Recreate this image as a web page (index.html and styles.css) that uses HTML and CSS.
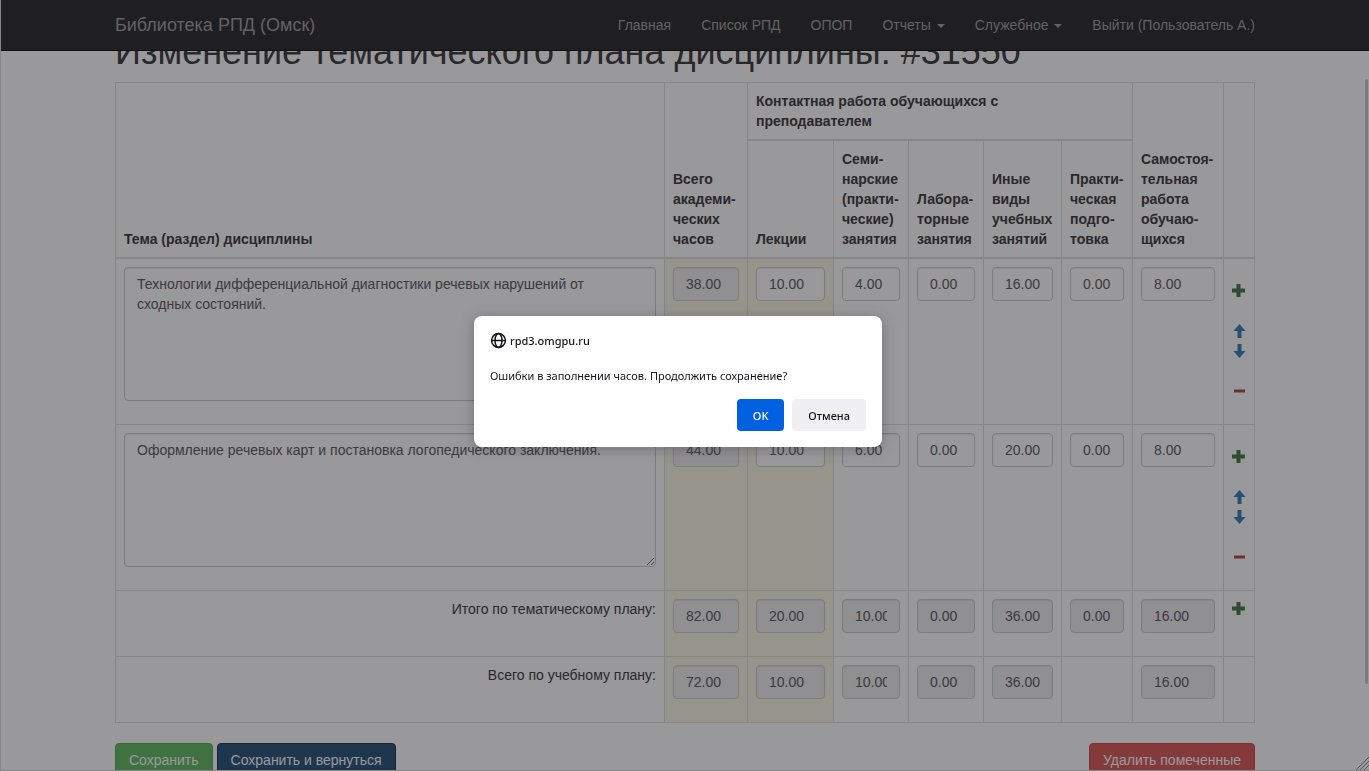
FILE: index.html
```html
<!DOCTYPE html>
<html lang="ru">
<head>
<meta charset="utf-8">
<title>Библиотека РПД (Омск)</title>
<link rel="stylesheet" href="styles.css">
</head>
<body>
<svg class="sprite" aria-hidden="true">
  <symbol id="plus" viewBox="0 0 14 14"><path d="M4.500 0h4v4.500H13v4H8.500V13h-4V8.500H0v-4h4.500z"/></symbol>
  <symbol id="minus" viewBox="0 0 14 14"><path d="M2 5.500h11v3H2z"/></symbol>
  <symbol id="up" viewBox="0 0 14 14"><path d="M7.500 0L13.500 7H9.500v7H5.500V7H1.500z"/></symbol>
  <symbol id="down" viewBox="0 0 14 14"><path d="M5.500 0h4v7h4L7.500 14 1.500 7h4z"/></symbol>
</svg>
<div class="window">
  <nav class="navbar">
    <div class="container navbar-inner">
      <a class="brand" href="#">Библиотека РПД (Омск)</a>
      <div class="nav-links">
        <a href="#">Главная</a>
        <a href="#">Список РПД</a>
        <a href="#">ОПОП</a>
        <a href="#">Отчеты <span class="caret"></span></a>
        <a href="#">Служебное <span class="caret"></span></a>
        <a href="#">Выйти (Пользователь А.)</a>
      </div>
    </div>
  </nav>
  <main class="container content">
    <h1>Изменение тематического плана дисциплины: #31550</h1>
    <table class="plan">
      <colgroup>
        <col><col class="c-total"><col class="c-lect"><col class="c-sem"><col class="c-lab"><col class="c-other"><col class="c-pract"><col class="c-self"><col class="c-act">
      </colgroup>
      <thead>
        <tr>
          <th rowspan="2">Тема (раздел) дисциплины</th>
          <th rowspan="2">Всего академи-<br>ческих часов</th>
          <th colspan="5">Контактная работа обучающихся с<br>преподавателем</th>
          <th rowspan="2">Самостоя-<br>тельная работа обучаю-<br>щихся</th>
          <th rowspan="2"></th>
        </tr>
        <tr>
          <th>Лекции</th>
          <th>Семи-<br>нарские (практи-<br>ческие) занятия</th>
          <th>Лабора-<br>торные занятия</th>
          <th>Иные виды учебных занятий</th>
          <th>Практи-<br>ческая подго-<br>товка</th>
        </tr>
      </thead>
      <tbody>
        <tr>
          <td><textarea class="field" rows="6" aria-label="Тема 1">Технологии дифференциальной диагностики речевых нарушений от
сходных состояний.</textarea></td>
          <td class="warn"><input class="field" aria-label="Всего" value="38.00" readonly></td>
          <td class="warn"><input class="field" aria-label="Лекции" value="10.00"></td>
          <td><input class="field" aria-label="Семинарские" value="4.00"></td>
          <td><input class="field" aria-label="Лабораторные" value="0.00"></td>
          <td><input class="field" aria-label="Иные виды" value="16.00"></td>
          <td><input class="field" aria-label="Практическая подготовка" value="0.00"></td>
          <td><input class="field" aria-label="Самостоятельная работа" value="8.00"></td>
          <td>
            <div class="actions">
              <a class="add" href="#" aria-label="Добавить"><svg><use href="#plus"/></svg></a>
              <div class="move">
                <a href="#" aria-label="Вверх"><svg><use href="#up"/></svg></a>
                <a href="#" aria-label="Вниз"><svg><use href="#down"/></svg></a>
              </div>
              <a class="remove" href="#" aria-label="Удалить"><svg><use href="#minus"/></svg></a>
            </div>
          </td>
        </tr>
        <tr>
          <td><textarea class="field" rows="6" aria-label="Тема 2">Оформление речевых карт и постановка логопедического заключения.</textarea></td>
          <td class="warn"><input class="field" aria-label="Всего" value="44.00" readonly></td>
          <td class="warn"><input class="field" aria-label="Лекции" value="10.00"></td>
          <td><input class="field" aria-label="Семинарские" value="6.00"></td>
          <td><input class="field" aria-label="Лабораторные" value="0.00"></td>
          <td><input class="field" aria-label="Иные виды" value="20.00"></td>
          <td><input class="field" aria-label="Практическая подготовка" value="0.00"></td>
          <td><input class="field" aria-label="Самостоятельная работа" value="8.00"></td>
          <td>
            <div class="actions">
              <a class="add" href="#" aria-label="Добавить"><svg><use href="#plus"/></svg></a>
              <div class="move">
                <a href="#" aria-label="Вверх"><svg><use href="#up"/></svg></a>
                <a href="#" aria-label="Вниз"><svg><use href="#down"/></svg></a>
              </div>
              <a class="remove" href="#" aria-label="Удалить"><svg><use href="#minus"/></svg></a>
            </div>
          </td>
        </tr>
        <tr>
          <td class="sum">Итого по тематическому плану:</td>
          <td class="warn"><input class="field" aria-label="Итого всего" value="82.00" readonly></td>
          <td class="warn"><input class="field" aria-label="Итого лекции" value="20.00" readonly></td>
          <td><input class="field" aria-label="Итого семинарские" value="10.00" readonly></td>
          <td><input class="field" aria-label="Итого лабораторные" value="0.00" readonly></td>
          <td><input class="field" aria-label="Итого иные виды" value="36.00" readonly></td>
          <td><input class="field" aria-label="Итого практическая подготовка" value="0.00" readonly></td>
          <td><input class="field" aria-label="Итого самостоятельная работа" value="16.00" readonly></td>
          <td><a class="add" href="#" aria-label="Добавить"><svg><use href="#plus"/></svg></a></td>
        </tr>
        <tr>
          <td class="sum">Всего по учебному плану:</td>
          <td class="warn"><input class="field" aria-label="План всего" value="72.00" readonly></td>
          <td class="warn"><input class="field" aria-label="План лекции" value="10.00" readonly></td>
          <td><input class="field" aria-label="План семинарские" value="10.00" readonly></td>
          <td><input class="field" aria-label="План лабораторные" value="0.00" readonly></td>
          <td><input class="field" aria-label="План иные виды" value="36.00" readonly></td>
          <td></td>
          <td><input class="field" aria-label="План самостоятельная работа" value="16.00" readonly></td>
          <td></td>
        </tr>
      </tbody>
    </table>
    <div class="buttons">
      <button class="btn save" type="button">Сохранить</button>
      <button class="btn save-back" type="button">Сохранить и вернуться</button>
      <button class="btn delete" type="button">Удалить помеченные</button>
    </div>
  </main>
  <div class="scrollbar"></div>
  <svg class="grip" viewBox="0 0 13 13"><path d="M0 13L13 0M4 13L13 4M8 13L13 8"/></svg>
</div>
<div class="overlay">
  <div class="dialog" role="dialog" aria-modal="true" aria-describedby="message">
    <div class="origin">
      <svg viewBox="0 0 16 16" aria-hidden="true"><circle cx="8" cy="8" r="6.500"/><ellipse cx="8" cy="8" rx="3.300" ry="6.500"/><path d="M1.500 8h13"/></svg>
      <span>rpd3.omgpu.ru</span>
    </div>
    <p id="message">Ошибки в заполнении часов. Продолжить сохранение?</p>
    <div class="dialog-buttons">
      <button class="ok" type="button">OK</button>
      <button class="cancel" type="button">Отмена</button>
    </div>
  </div>
</div>
</body>
</html>
```

FILE: styles.css
```css
* { box-sizing: border-box; }

body {
  margin: 0;
  color: #333;
  background: #fff;
  font: 14px/20px "Liberation Sans", Arial, sans-serif;
}

a { text-decoration: none; }

.sprite { display: none; }

.window {
  position: relative;
  height: 100vh;
  overflow: hidden;
  border-left: 1px solid #ddd;
  border-bottom: 1px solid #ddd;
}

.container {
  max-width: 1140px;
  margin: 0 auto;
}

.navbar {
  position: absolute;
  top: 0;
  left: 0;
  right: 0;
  z-index: 1;
  background: #222;
  border-bottom: 1px solid #080808;
}

.navbar-inner {
  display: flex;
  align-items: center;
  justify-content: space-between;
  height: 50px;
}

.navbar a { color: #9d9d9d; }

.navbar .brand { font-size: 18px; }

.nav-links {
  display: flex;
  gap: 30px;
}

.caret {
  display: inline-block;
  margin-left: 2px;
  vertical-align: middle;
  border-top: 4px solid;
  border-left: 4px solid transparent;
  border-right: 4px solid transparent;
}

.content { padding-top: 32px; }

h1 {
  margin: 0 0 10px;
  font-size: 36px;
  font-weight: 500;
  line-height: 40px;
}

.plan {
  width: 100%;
  margin-bottom: 20px;
  table-layout: fixed;
  border-collapse: collapse;
}

.c-total { width: 83px; }
.c-lect { width: 86px; }
.c-sem, .c-lab { width: 75px; }
.c-other { width: 78px; }
.c-pract { width: 71px; }
.c-self { width: 91px; }
.c-act { width: 31px; }

.plan th, .plan td {
  padding: 8px;
  border: 1px solid #ddd;
  text-align: left;
  vertical-align: top;
}

.plan th {
  vertical-align: bottom;
  border-bottom-width: 2px;
}

.plan .warn { background: #fcf8e3; }

.plan .sum { text-align: right; }

.field {
  display: block;
  width: 100%;
  margin: 0 0 15px;
  padding: 6px 12px;
  border: 1px solid #ccc;
  border-radius: 4px;
  color: #555;
  background: #fff;
  font: inherit;
  box-shadow: inset 0 1px 1px rgba(0, 0, 0, 0.075);
}

input.field { height: 34px; }

.field:read-only { background: #eee; }

.actions {
  display: flex;
  flex-direction: column;
  gap: 20px;
  padding-top: 14px;
}

.plan td a {
  display: block;
  padding: 3px 0;
}

.plan svg {
  display: block;
  width: 14px;
  height: 14px;
  fill: currentColor;
}

.add { color: #3c763d; }
.move a { color: #337ab7; }
.remove { color: #a94442; }

.buttons {
  display: flex;
  gap: 4px;
}

.btn {
  padding: 6px 13px;
  border: 1px solid;
  border-radius: 4px;
  color: #fff;
  font: inherit;
}

.save { background: #5cb85c; border-color: #4cae4c; }
.save-back { background: #204d74; border-color: #122b40; }
.delete { margin-left: auto; background: #d9534f; border-color: #d43f3a; }

.scrollbar {
  position: absolute;
  top: 79px;
  right: 1px;
  width: 3px;
  height: 605px;
  border-radius: 2px;
  background: #c8c8c8;
}

.grip {
  position: absolute;
  right: 0;
  bottom: 0;
  width: 13px;
  height: 13px;
  fill: none;
  stroke: #888;
}

.overlay {
  position: fixed;
  inset: 0;
  z-index: 2;
  display: flex;
  align-items: center;
  justify-content: center;
  padding: 0 13px 8px 0;
  background: rgba(28, 27, 34, 0.45);
}

.dialog {
  width: 408px;
  padding: 16px;
  border-radius: 8px;
  color: #15141a;
  background: #fff;
  font: 11px/17px "Noto Sans", "Open Sans", sans-serif;
  box-shadow: 0 2px 14px rgba(58, 57, 68, 0.4);
}

.origin {
  display: flex;
  align-items: center;
  gap: 3px;
  font-weight: 500;
}

.origin svg {
  width: 17px;
  height: 17px;
  fill: none;
  stroke: currentColor;
  stroke-width: 1.4;
}

.dialog p { margin: 18px 0 15px; }

.dialog-buttons {
  display: flex;
  justify-content: flex-end;
  gap: 8px;
}

.dialog button {
  height: 32px;
  padding: 0 16px;
  border: 0;
  border-radius: 4px;
  font: inherit;
  font-weight: 500;
}

.ok { color: #fff; background: #0061e0; }
.cancel { color: #15141a; background: #f0f0f2; }
```
